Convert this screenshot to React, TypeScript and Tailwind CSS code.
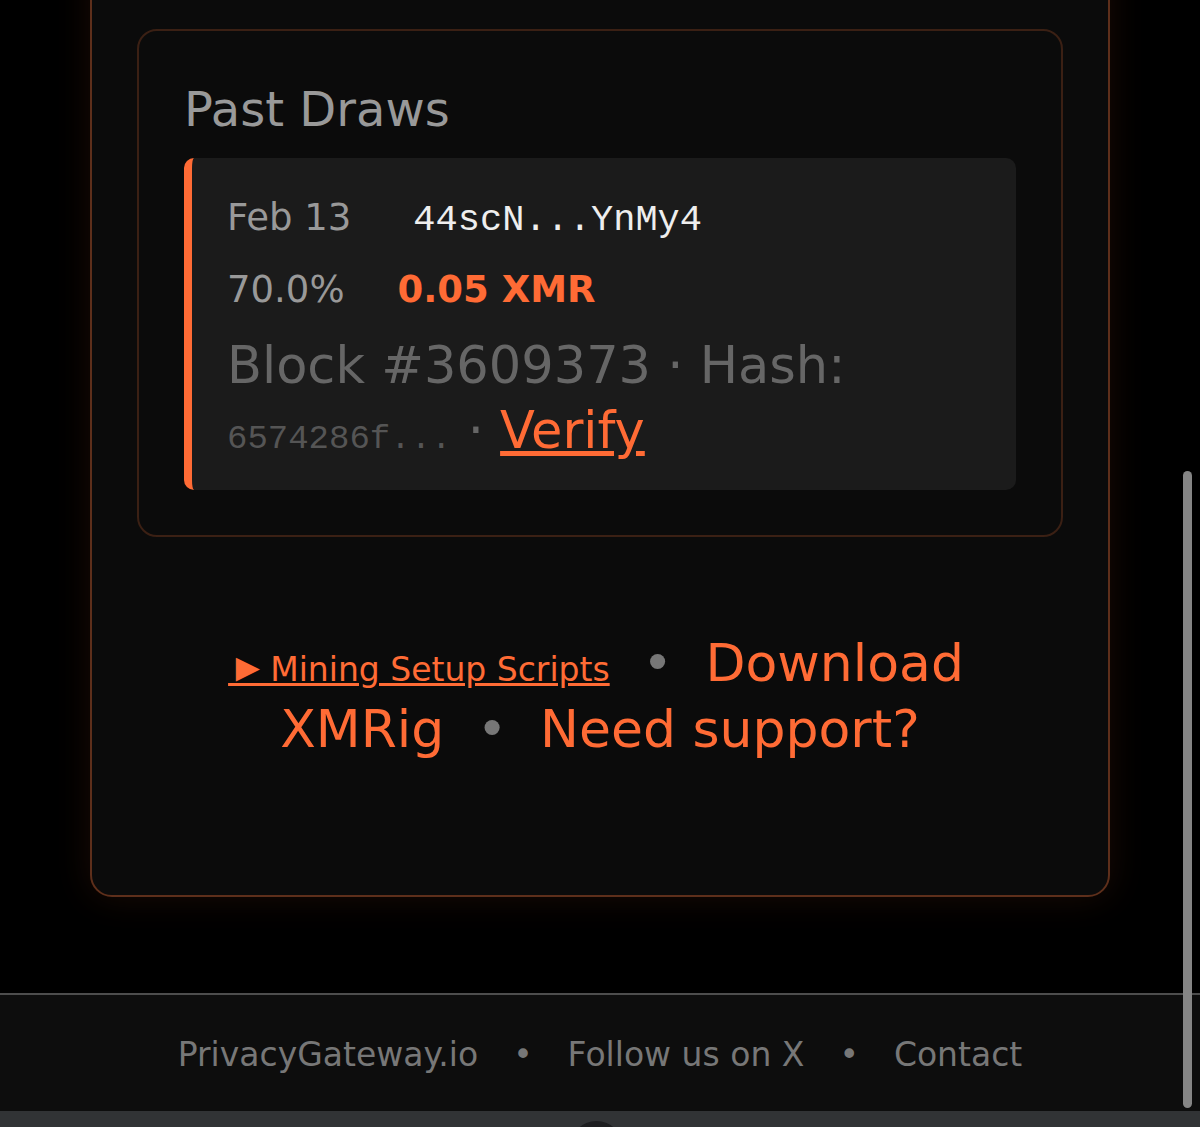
import React from 'react';

interface Draw {
  date: string;
  address: string;
  share: string;
  amount: string;
  block: string;
  hash: string;
}

const draws: Draw[] = [
  {
    date: 'Feb 13',
    address: '44scN...YnMy4',
    share: '70.0%',
    amount: '0.05 XMR',
    block: '3609373',
    hash: '6574286f...',
  },
];

function DrawRow({ draw }: { draw: Draw }) {
  return (
    <div className="bg-[#1b1b1b] border-l-[8px] border-[#ff6b35] rounded-[10px] pl-[35px] pr-6 pt-[36px] pb-[27px]">
      <div className="flex items-baseline gap-[62px] text-[37px] leading-[48px]">
        <span className="text-[#999]">{draw.date}</span>
        <span className="font-['Liberation_Mono',monospace] text-[#eeeeee]">{draw.address}</span>
      </div>
      <div className="mt-[22px] flex items-baseline gap-[53px] text-[37px] leading-[48px]">
        <span className="text-[#999]">{draw.share}</span>
        <span className="font-bold text-[#ff6b35]">{draw.amount}</span>
      </div>
      <p className="mt-[19px] text-[51px] leading-[65px] text-[#666]">
        Block #{draw.block} · Hash:{' '}
        <span className="font-['Liberation_Mono',monospace] text-[34px] leading-[34px] text-[#555]">{draw.hash}</span> ·{' '}
        <a href="#" className="text-[#ff6b35] underline">
          Verify
        </a>
      </p>
    </div>
  );
}

export default function App() {
  return (
    <div className="relative h-[1127px] overflow-hidden bg-black font-['DejaVu_Sans',sans-serif]">
      <div className="ml-[90px] -mt-[40px] w-[1020px] rounded-b-[22px] border-2 border-[#5e2f1b] bg-[#0b0b0b] px-[45px] pt-[67px] pb-[133px] shadow-[0_0_36px_rgba(255,107,53,0.1)]">
        <div className="rounded-[20px] border-2 border-[#3b2014] bg-[#0b0b0b] px-[45px] pt-[50px] pb-[45px]">
          <h2 className="text-[48px] leading-[56px] text-[#999] mb-[21px]">Past Draws</h2>
          {draws.map((d) => (
            <DrawRow key={d.block} draw={d} />
          ))}
        </div>

        <p className="mt-[93px] px-[60px] text-center text-[52px] leading-[66px] text-[#ff6b35]">
          <a href="#" className="text-[33px] leading-[33px] underline">
            <span className="-mx-[8px] font-['Noto_Sans_CJK_JP',sans-serif] text-[40px]">►</span> Mining Setup Scripts
          </a>{' '}
          <span className="mx-4 text-[#777]">•</span>{' '}
          <a href="#">Download XMRig</a> <span className="mx-4 text-[#777]">•</span>{' '}
          <a href="#">Need support?</a>
        </p>
      </div>

      <footer className="mt-[96px] border-t-2 border-[#4d4d4d] bg-[#0d0d0d] pt-[40px] pb-[36px]">
        <div className="flex items-baseline justify-center gap-[35px] text-[33px] leading-[40px] text-[#777]">
          <a href="#">PrivacyGateway.io</a>
          <span>•</span>
          <a href="#">Follow us on X</a>
          <span>•</span>
          <a href="#">Contact</a>
        </div>
      </footer>

      <div className="relative h-[17px] overflow-hidden bg-[#313335]">
        <div className="absolute left-[570px] top-[10px] h-[53px] w-[53px] rounded-full bg-[#1d1e20]" />
      </div>

      <div className="absolute left-[1183px] top-[471px] h-[637px] w-[9px] rounded-full bg-[#858585]" />
    </div>
  );
}
